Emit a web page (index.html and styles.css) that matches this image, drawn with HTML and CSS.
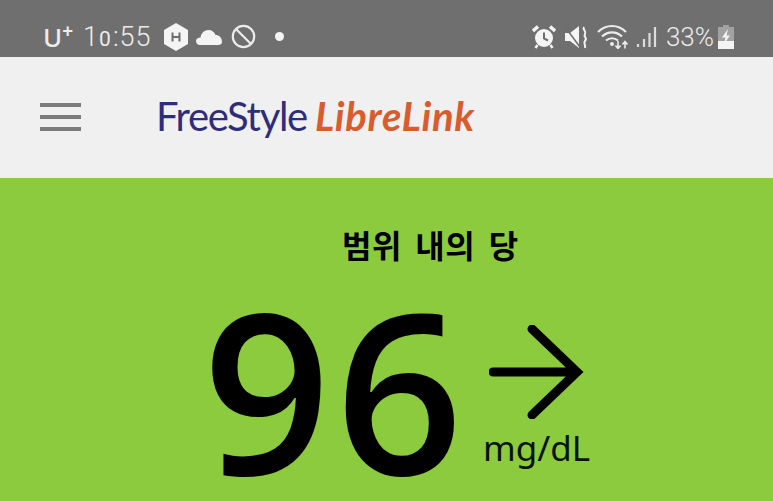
FILE: index.html
```html
<!DOCTYPE html>
<html lang="ko">
<head>
    <meta charset="UTF-8">
    <meta name="viewport" content="width=device-width, initial-scale=1.0">
    <title>FreeStyle LibreLink</title>
    <link rel="stylesheet" href="styles.css">
</head>
<body>

    <div class="status-bar">
        <div class="status-left">
            <span class="carrier">U<sup class="carrier-plus">+</sup></span>
            <span class="clock">1<span class="clock-zero">0</span>:55</span>
            <svg class="icon-hex" width="26" height="28" viewBox="0 0 26 28">
                <polygon points="13,0 25,7 25,21 13,28 1,21 1,7" fill="#f4f4f4"/>
                <path d="M9.500 9.500V18.500M16.500 9.500V18.500M9.500 14H16.500" stroke="#6d6d6d" stroke-width="2" fill="none"/>
            </svg>
            <svg class="icon-cloud" width="26" height="18" viewBox="0 0 26 18">
                <path d="M4 17C2 17 0 15.500 0 13C0 11 2 9.500 4.500 9.500C5 5 8.500 2 12.500 2C16 2 18.500 4 19.500 7C23 7 26 9.500 26 14C26 16 24.500 17 22 17Z" fill="#f4f4f4"/>
            </svg>
            <svg class="icon-block" width="25" height="25" viewBox="0 0 25 25">
                <circle cx="12.500" cy="12.500" r="10.700" stroke="#ececec" stroke-width="2.200" fill="none"/>
                <path d="M5 5L20 20" stroke="#ececec" stroke-width="2.200"/>
            </svg>
            <span class="dot"></span>
        </div>
        <div class="status-right">
            <svg class="icon-alarm" width="24" height="25" viewBox="0 0 24 25">
                <circle cx="12" cy="14" r="9" fill="#f4f4f4"/>
                <path d="M12 8.500V14.500L16 16.500" stroke="#6d6d6d" stroke-width="2" fill="none"/>
                <path d="M1 7L6 2.500M23 7L18 2.500" stroke="#f4f4f4" stroke-width="3.500"/>
                <path d="M5.500 21L3.500 24M18.500 21L20.500 24" stroke="#f4f4f4" stroke-width="2.500"/>
            </svg>
            <svg class="icon-mute" width="23" height="24" viewBox="0 0 23 24">
                <path d="M0 8H5L14 1V23L5 16H0Z" fill="#f4f4f4"/>
                <path d="M0 2L15 22" stroke="#6d6d6d" stroke-width="1.500"/>
                <path d="M19 2C17 5 22 6 20 9C18 12 23 13 20 16C18 18 21 20 20 23" stroke="#f4f4f4" stroke-width="2" fill="none"/>
            </svg>
            <svg class="icon-wifi" width="33" height="25" viewBox="0 0 33 25">
                <path d="M1 8C9 0 21 0 29 8M5 12.500C11 7 19 7 25 12.500M9 16.500C12.500 13.500 17.500 13.500 21 16.500" stroke="#ececec" stroke-width="2.200" fill="none"/>
                <circle cx="15" cy="20" r="2" fill="#ececec"/>
                <path d="M21 17V24M18.500 21.500L21 24.500L23.500 21.500M28 24.500V18M25.500 20.500L28 17.500L30.500 20.500" stroke="#ececec" stroke-width="1.600" fill="none"/>
            </svg>
            <svg class="icon-signal" width="21" height="22" viewBox="0 0 21 22">
                <path d="M2 18V21M8 13V21M13.500 7V21M19 1V21" stroke="#dcdcdc" stroke-width="2.200" fill="none"/>
            </svg>
            <span class="battery-text">33%</span>
            <svg class="icon-battery" width="16" height="24" viewBox="0 0 16 24">
                <path d="M5 0H11V2H16V24H0V2H5Z" fill="#a2a2a2"/>
                <path d="M0 16H16V24H0Z" fill="#f4f4f4"/>
                <path d="M10 4L4 12.500H7.500L6 19L12 10.500H8.500Z" fill="#f4f4f4"/>
            </svg>
        </div>
    </div>

    <header class="app-header">
        <div class="menu-icon">
            <span></span>
            <span></span>
            <span></span>
        </div>
        <div class="logo">
            <span class="logo-free">FreeStyle</span>
            <span class="logo-libre">LibreLink</span>
        </div>
    </header>

    <main class="reading">
        <p class="reading-label">범위 내의 당</p>
        <div class="reading-row">
            <span class="reading-value">96</span>
            <div class="reading-side">
                <svg class="trend-arrow" width="96" height="94" viewBox="0 0 96 94">
                    <path d="M4 47H88M43 4L88 47L43 90" stroke="#000" stroke-width="9" stroke-linecap="round" stroke-linejoin="miter" fill="none"/>
                </svg>
                <span class="reading-unit">mg/dL</span>
            </div>
        </div>
    </main>

</body>
</html>
```

FILE: styles.css
```css
html, body {
    height: 100%;
}

body {
    margin: 0;
    display: flex;
    flex-direction: column;
    overflow: hidden;
    background-color: #8ccb3d;
    font-family: "Open Sans", sans-serif;
}

/* status bar */
.status-bar {
    height: 57px;
    flex: none;
    display: flex;
    justify-content: space-between;
    align-items: center;
    background-color: #6f6f6f;
    color: #ececec;
    padding: 0 39px 0 43px;
    box-sizing: border-box;
}

.status-left,
.status-right {
    display: flex;
    align-items: center;
    padding-top: 16px;
    height: 40px;
    box-sizing: border-box;
}

.carrier {
    font-family: "Noto Sans", sans-serif;
    font-size: 26px;
    font-weight: 500;
    line-height: 1;
    margin-right: 10px;
}

.carrier-plus {
    font-size: 19px;
    font-weight: 700;
    line-height: 0;
    vertical-align: 9px;
}

.clock {
    font-family: "Roboto", sans-serif;
    font-size: 27px;
    font-weight: 300;
    letter-spacing: 1px;
    margin-right: 11px;
}

.clock-zero {
    font-size: 21px;
    font-weight: 400;
    letter-spacing: 2px;
}

.icon-hex {
    margin-right: 7px;
}

.icon-cloud {
    margin-right: 9px;
}

.icon-block {
    margin-right: 19px;
}

.dot {
    width: 9px;
    height: 9px;
    border-radius: 50%;
    background-color: #f4f4f4;
}

.icon-alarm {
    margin-right: 9px;
}

.icon-mute {
    margin-right: 9px;
}

.icon-wifi {
    margin-right: 6px;
}

.icon-signal {
    margin-right: 9px;
}

.battery-text {
    font-family: "Roboto", sans-serif;
    font-size: 26px;
    font-weight: 300;
    margin-right: 4px;
}

/* app header */
.app-header {
    height: 121px;
    flex: none;
    display: flex;
    align-items: center;
    background-color: #f0f0f0;
    padding-left: 40px;
}

.menu-icon {
    width: 41px;
    display: flex;
    flex-direction: column;
    gap: 8px;
    margin-right: 75px;
    margin-bottom: 2px;
}

.menu-icon span {
    height: 4px;
    background-color: #7b7b7b;
}

.logo {
    display: flex;
    align-items: baseline;
    gap: 8px;
    font-family: "Lato", sans-serif;
    font-size: 40px;
    margin-bottom: 4px;
}

.logo-free {
    color: #2e2d7c;
    letter-spacing: -1.300px;
}

.logo-libre {
    font-style: italic;
    font-weight: 700;
    color: #d95c2e;
    letter-spacing: 0.700px;
}

/* reading */
.reading {
    flex: 1;
    min-height: 0;
    display: flex;
    flex-direction: column;
}

.reading-label {
    margin: 44px 0 0 342px;
    font-family: "Noto Sans CJK KR", sans-serif;
    font-size: 32px;
    font-weight: 700;
    line-height: 44px;
    letter-spacing: 0.500px;
    word-spacing: 4px;
    color: #000;
}

.reading-row {
    display: flex;
    align-items: flex-start;
    margin-left: 203px;
}

.reading-value {
    font-family: "Open Sans", sans-serif;
    font-size: 223px;
    font-weight: 600;
    line-height: 221px;
    letter-spacing: 5px;
    margin-top: 12px;
    color: #000;
}

.reading-side {
    display: flex;
    flex-direction: column;
    align-items: flex-end;
    margin-left: 15px;
    padding-top: 59px;
}

.trend-arrow {
    margin-right: 5px;
}

.reading-unit {
    font-family: "Noto Sans", sans-serif;
    font-size: 35px;
    line-height: 40px;
    margin-top: 9px;
    color: #0a1203;
}
```
